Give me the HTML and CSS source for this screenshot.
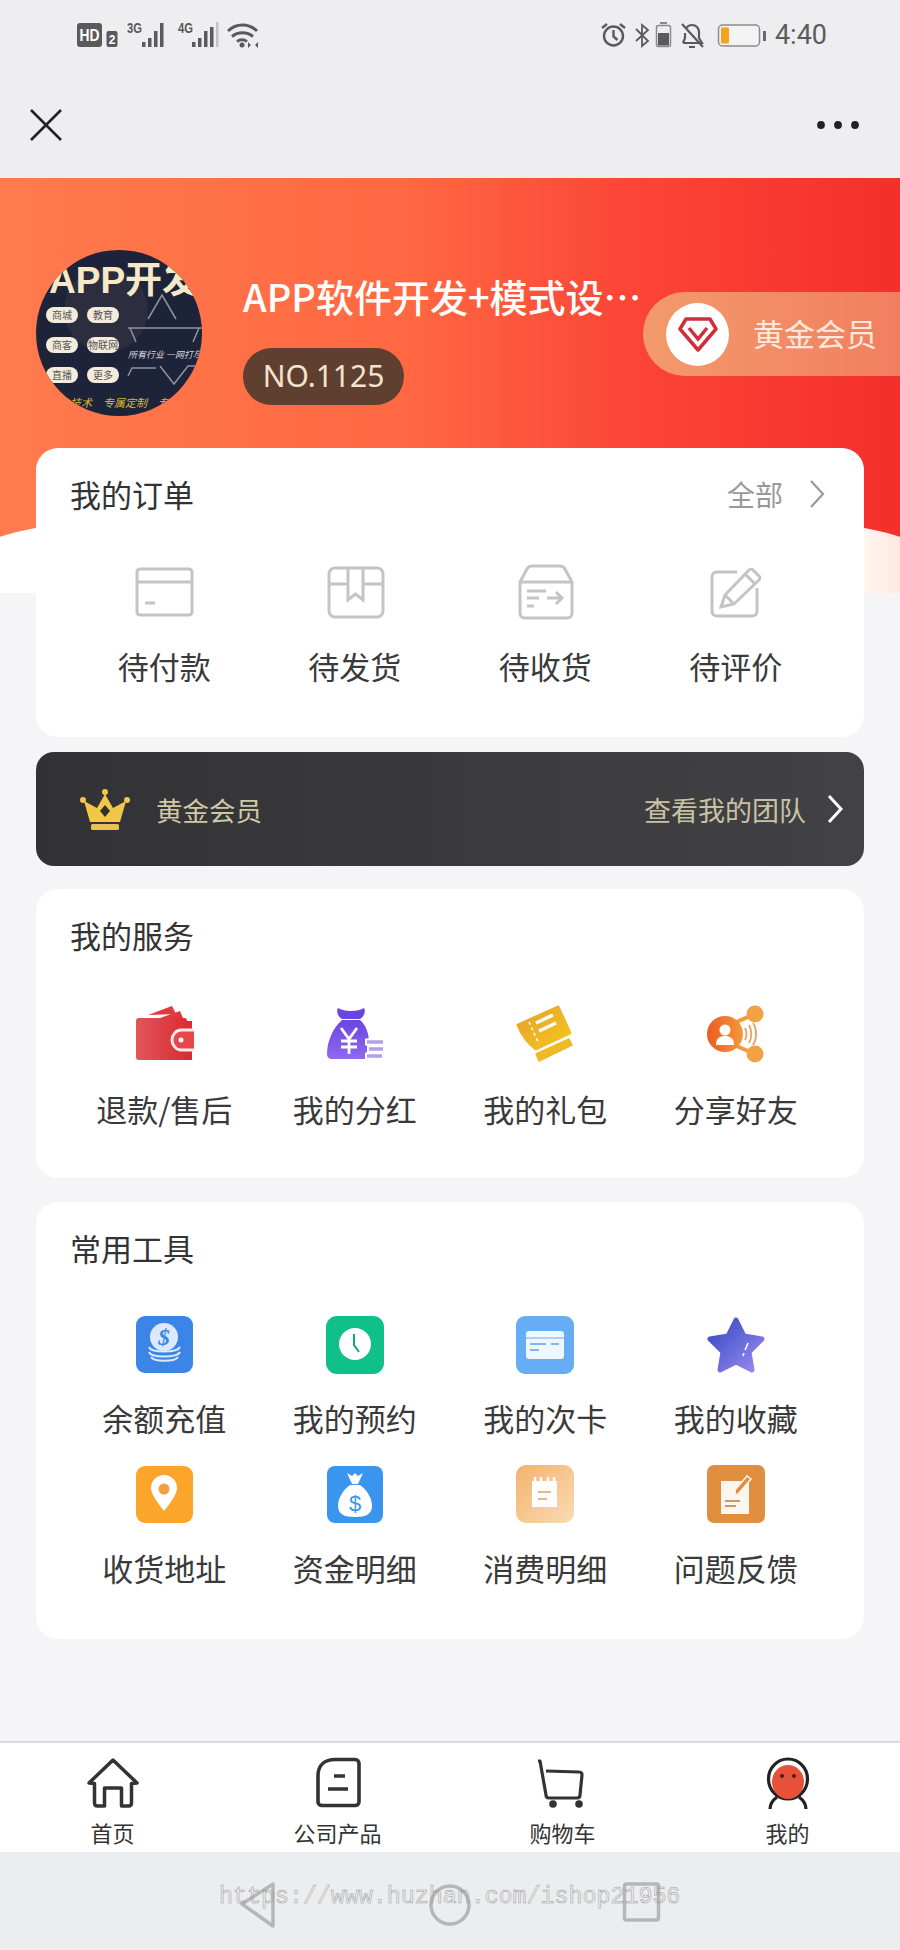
FILE: index.html
```html
<!DOCTYPE html>
<html lang="zh-CN">
<head>
<meta charset="utf-8">
<title>我的</title>
<link rel="stylesheet" href="styles.css">
</head>
<body>
<div class="page">
  <header class="top">
    <div class="status">
      <svg class="status-left" viewBox="76 20 190 30" width="190" height="30">
        <rect x="77" y="23" width="25" height="24" rx="3" fill="#5a5a5c"/>
        <text x="89.500" y="41" class="st-hd" textLength="20" lengthAdjust="spacingAndGlyphs">HD</text>
        <rect x="106.500" y="31" width="11" height="16" rx="2" fill="#5a5a5c"/>
        <text x="112" y="44" class="st-two">2</text>
        <text x="127" y="33" class="st-net" textLength="15" lengthAdjust="spacingAndGlyphs">3G</text>
        <g fill="#5a5a5c">
          <rect x="142" y="42" width="3.500" height="5"/><rect x="148" y="38" width="3.500" height="9"/><rect x="154" y="31" width="3.500" height="16"/><rect x="160" y="23" width="3.500" height="24"/>
        </g>
        <text x="178" y="33" class="st-net" textLength="15" lengthAdjust="spacingAndGlyphs">4G</text>
        <g fill="#5a5a5c">
          <rect x="192" y="42" width="3.500" height="5"/><rect x="198" y="38" width="3.500" height="9"/><rect x="204" y="31" width="3.500" height="16"/><rect x="210" y="27" width="3.500" height="20"/>
        </g>
        <rect x="216" y="22" width="2.500" height="25" fill="#c4c4c6"/>
        <g fill="none" stroke="#5a5a5c" stroke-width="3">
          <path d="M228 31c8-8 21-8 29 0"/><path d="M232 36.500c6-5 15-5 21 0"/><path d="M237 41.500c3-2 7-2 10 0"/>
        </g>
        <circle cx="242" cy="45" r="2.500" fill="#5a5a5c"/>
        <path d="M248 42l3 3-3 3zM258 42l-3 3 3 3z" fill="#5a5a5c"/>
      </svg>
      <div class="status-right">
        <svg viewBox="598 20 170 30" width="170" height="30">
          <g fill="none" stroke="#5a5a5c" stroke-width="2.400">
            <circle cx="612.500" cy="36" r="9.500"/>
            <path d="M612.500 30v6.500l4 3.500"/>
            <path d="M601 28l5-4M624 28l-5-4"/>
            <path d="M635 29l12 12-6 5V25l6 5-12 11" stroke-width="1.800"/>
          </g>
          <rect x="655.500" y="25.500" width="14" height="21" rx="2" fill="none" stroke="#8a8a8c" stroke-width="1.500"/>
          <rect x="659" y="22" width="7" height="2" fill="#8a8a8c"/>
          <rect x="657" y="33" width="11" height="12.500" fill="#5a5a5c"/>
          <g fill="none" stroke="#5a5a5c" stroke-width="2.200">
            <path d="M682 43h19l-3-5v-6c0-4-3-7-7-7-2.500 0-4.500 1-5.500 3M684 33v5l-2 5"/>
            <path d="M681 24l21 23M688 47h6"/>
          </g>
          <rect x="717.500" y="25" width="41" height="21" rx="4" fill="#f3f3f3" stroke="#8c8c8c" stroke-width="1.500"/>
          <rect x="720" y="27.500" width="8" height="16" rx="1" fill="#f7a21b"/>
          <rect x="762" y="31" width="3" height="10" fill="#6a6a6a"/>
        </svg>
        <span class="clock">4:40</span>
      </div>
    </div>
    <div class="navbar">
      <svg viewBox="0 0 32 32" width="32" height="32"><path d="M1 1l30 30M31 1L1 31" stroke="#222" stroke-width="2.600" fill="none"/></svg>
      <svg viewBox="0 0 42 8" width="42" height="8"><circle cx="4" cy="4" r="3.900" fill="#222"/><circle cx="21" cy="4" r="3.900" fill="#222"/><circle cx="38" cy="4" r="3.900" fill="#222"/></svg>
    </div>
  </header>

  <section class="hero">
    <div class="avatar">
      <svg viewBox="0 0 166 166" width="166" height="166">
        <rect width="166" height="166" fill="#1d2338"/>
        <circle cx="70" cy="60" r="42" fill="#3b3a45" opacity=".5"/>
        <text x="13" y="43" class="av-title">APP开发</text>
        <g class="av-chip-box">
          <rect x="10" y="57" width="32" height="16" rx="8"/><rect x="51" y="57" width="32" height="16" rx="8"/>
          <rect x="10" y="87" width="32" height="16" rx="8"/><rect x="51" y="87" width="32" height="16" rx="8"/>
          <rect x="10" y="117" width="32" height="16" rx="8"/><rect x="51" y="117" width="32" height="16" rx="8"/>
        </g>
        <g class="av-chip">
          <text x="26" y="69">商城</text><text x="67" y="69">教育</text>
          <text x="26" y="99">商客</text><text x="67" y="99">物联网</text>
          <text x="26" y="129">直播</text><text x="67" y="129">更多</text>
        </g>
        <g fill="none" stroke="#8d93a5" stroke-width="1.500">
          <path d="M112 69l14-24 14 24"/><path d="M92 78h74M94 78l6 14M163 78l-6 14"/>
          <path d="M92 126l4-8h24M124 116l14 18 14-18h14"/>
        </g>
        <text x="92" y="108" class="av-sub">所有行业 一网打尽</text>
        <text x="34" y="157" class="av-foot">技术　专属定制　专</text>
      </svg>
    </div>
    <div class="hero-info">
      <h1 class="hero-title">APP软件开发+模式设…</h1>
      <span class="hero-no">NO.1125</span>
    </div>
    <div class="hero-level">
      <span class="level-badge">
        <svg viewBox="0 0 40 36" width="40" height="36"><path d="M8 3h24l6 10-18 21L2 13z" fill="none" stroke="#cf2f3a" stroke-width="3.500" stroke-linejoin="round"/><path d="M11 12l9 11 9-11" fill="none" stroke="#cf2f3a" stroke-width="3.500"/></svg>
      </span>
      <span class="level-text">黄金会员</span>
    </div>
  </section>

  <main class="main">
    <section class="card card-orders">
      <div class="card-head">
        <h2 class="card-title">我的订单</h2>
        <div class="card-more">
          <span>全部</span>
          <svg viewBox="0 0 16 30" width="16" height="30"><path d="M2 2l12 13L2 28" fill="none" stroke="#999" stroke-width="2.200"/></svg>
        </div>
      </div>
      <div class="grid">
        <div class="cell">
          <svg class="slot" viewBox="0 0 60 60"><g fill="none" stroke="#c4c4c5" stroke-width="3"><rect x="3" y="7" width="55" height="46" rx="3"/><path d="M3 20h55"/><path d="M11 41h10"/></g></svg>
          <span class="label">待付款</span>
        </div>
        <div class="cell">
          <svg class="slot" viewBox="0 0 60 60"><g fill="none" stroke="#c4c4c5" stroke-width="3"><rect x="4" y="6" width="54" height="49" rx="6"/><path d="M4 22h19M38 22h20"/><path d="M23 6v32l7.500-6 7.500 6V6"/></g></svg>
          <span class="label">待发货</span>
        </div>
        <div class="cell">
          <svg class="slot" viewBox="0 0 60 60"><g fill="none" stroke="#c4c4c5" stroke-width="3"><path d="M5 20l7-13c1-2 3-3 5-3h28c2 0 4 1 5 3l7 13v31c0 3-2 5-5 5H10c-3 0-5-2-5-5z"/><path d="M5 20h52"/><path d="M12 29h19M12 36h12M12 44h7M32 36h15M41 30l6 6-6 6"/></g></svg>
          <span class="label">待收货</span>
        </div>
        <div class="cell">
          <svg class="slot" viewBox="0 0 60 60"><g fill="none" stroke="#c4c4c5" stroke-width="3"><path d="M31 10H11c-3 0-5 2-5 5v34c0 3 2 5 5 5h35c3 0 5-2 5-5V26"/><path d="M15 45l4-12 24-25c1-1 3-1 4 0l6 6c1 1 1 3 0 4L28 42z"/><path d="M39 12l10 10M19 33l9 9"/></g></svg>
          <span class="label">待评价</span>
        </div>
      </div>
    </section>

    <section class="member">
      <svg class="crown" viewBox="0 0 50 42" width="50" height="42">
        <path d="M25 6l8 14 13-7-6 21H10L4 13l13 7z" fill="#f1c74a"/>
        <circle cx="25" cy="4" r="3" fill="#f1c74a"/><circle cx="3" cy="12" r="3" fill="#f1c74a"/><circle cx="47" cy="12" r="3" fill="#f1c74a"/>
        <path d="M25 17l5 6-5 6-5-6z" fill="#33302c"/>
        <rect x="11" y="36" width="28" height="6" rx="1.500" fill="#e7c058"/>
      </svg>
      <span class="member-name">黄金会员</span>
      <span class="member-link">查看我的团队</span>
      <svg viewBox="0 0 18 30" width="18" height="30"><path d="M3 2l12 13L3 28" fill="none" stroke="#fff" stroke-width="3"/></svg>
    </section>

    <section class="card card-service">
      <div class="card-head"><h2 class="card-title">我的服务</h2></div>
      <div class="grid">
        <div class="cell">
          <svg class="slot" viewBox="0 0 60 60">
            <defs><linearGradient id="gWallet" x1="0" x2="1"><stop offset="0" stop-color="#e05659"/><stop offset="1" stop-color="#d92a30"/></linearGradient></defs>
            <path d="M14 12L38 3l4 8zM26 15l20-7 3 7z" fill="#dc3b40"/>
            <path d="M2 18c0-2 1-3 3-3h45c2 0 3 1 3 3h5v39H5c-2 0-3-1-3-3z" fill="url(#gWallet)"/>
            <path d="M60 27H47c-5 0-9 5-9 10s4 10 9 10h13" fill="#e5474b" stroke="#fbe9e9" stroke-width="3"/>
            <circle cx="47" cy="37" r="2.500" fill="#fff"/>
          </svg>
          <span class="label">退款/售后</span>
        </div>
        <div class="cell">
          <svg class="slot" viewBox="0 0 60 60">
            <defs><linearGradient id="gBag" x1="0" x2="0" y1="0" y2="1"><stop offset="0" stop-color="#6b45e2"/><stop offset="1" stop-color="#8f69ee"/></linearGradient></defs>
            <path d="M13 5c6 4 20 4 26 0 2 3 0 9-4 11H17c-4-2-6-8-4-11z" fill="#6b45e2"/>
            <path d="M17 17h18c6 5 9 14 9 23v14c0 1-1 2-2 2H7c-3 0-5-2-5-5 0-13 6-26 15-34z" fill="url(#gBag)"/>
            <path d="M16 25l8 11 8-11M24 36v15M16 38h16M16 44h16" fill="none" stroke="#fff" stroke-width="2.800"/>
            <path d="M40 39h18M42 46h16M40 53h17" stroke="#fff" stroke-width="7"/>
            <path d="M42 39h16M44 46h14M42 53h15" stroke="#b3a0ea" stroke-width="3.500"/>
          </svg>
          <span class="label">我的分红</span>
        </div>
        <div class="cell">
          <svg class="slot" viewBox="0 0 60 60">
            <defs><linearGradient id="gTicket" x1="0" x2="1" y1="0" y2="1"><stop offset="0" stop-color="#e6a02b"/><stop offset="1" stop-color="#f5c81f"/></linearGradient></defs>
            <path d="M24 58l-3-7 33-15 3 6z" fill="#eeba26" stroke="#eeba26" stroke-width="1.500" stroke-linejoin="round"/>
            <path d="M3 22L43 4l12 26-34 16C14 41 7 32 3 22z" fill="url(#gTicket)" stroke="url(#gTicket)" stroke-width="3" stroke-linejoin="round"/>
            <path d="M14 19l10 22" stroke="#fff" stroke-width="1.500" stroke-dasharray="3 3" fill="none"/>
            <path d="M21 20l17-8M24 28l17-8" stroke="#fff" stroke-width="3.500"/>
          </svg>
          <span class="label">我的礼包</span>
        </div>
        <div class="cell">
          <svg class="slot" viewBox="0 0 60 60">
            <defs><linearGradient id="gShare" x1="0" x2="1"><stop offset="0" stop-color="#ee5a22"/><stop offset="1" stop-color="#f19a3a"/></linearGradient></defs>
            <path d="M28 20L49 11M28 42l21 9" stroke="#f19a3a" stroke-width="4"/>
            <circle cx="49" cy="11" r="8.500" fill="#f2a145"/><circle cx="49" cy="51" r="8.500" fill="#f2a145"/>
            <circle cx="19" cy="31" r="18" fill="url(#gShare)"/>
            <circle cx="19" cy="27" r="5.500" fill="#fff"/><path d="M10 42c0-7 4-9 9-9s9 2 9 9z" fill="#fff"/>
            <g fill="none" stroke="#e8a060" stroke-width="1.800"><path d="M39 25c2 4 2 8 0 12M43 22c3 5 3 13 0 18M47 20c4 6 4 16 0 22"/></g>
          </svg>
          <span class="label">分享好友</span>
        </div>
      </div>
    </section>

    <section class="card card-tools">
      <div class="card-head"><h2 class="card-title">常用工具</h2></div>
      <div class="grid grid-tools">
        <div class="cell">
          <svg class="slot" viewBox="0 0 60 60">
            <rect x="2" y="2" width="57" height="57" rx="9" fill="#3b85e6"/>
            <g fill="none" stroke="#dbe9fb" stroke-width="2.200"><path d="M15 33c2 6 28 6 31 0M15 38c2 6 28 6 31 0M17 43c3 5 24 5 27 0"/></g>
            <circle cx="30" cy="23" r="14" fill="#dbe9fb"/>
            <text x="30" y="31" class="ic-dollar">$</text>
          </svg>
          <span class="label">余额充值</span>
        </div>
        <div class="cell">
          <svg class="slot" viewBox="0 0 60 60">
            <rect x="1" y="2" width="58" height="58" rx="11" fill="#0fc088"/>
            <circle cx="30" cy="30" r="16" fill="#fff"/>
            <path d="M29 20v11l5 7" fill="none" stroke="#0fa878" stroke-width="2"/>
          </svg>
          <span class="label">我的预约</span>
        </div>
        <div class="cell">
          <svg class="slot" viewBox="0 0 60 60">
            <rect x="1" y="2" width="58" height="58" rx="9" fill="#67adf6"/>
            <rect x="11" y="17" width="38" height="28" rx="3" fill="#eef6fe"/>
            <path d="M11 24h38" stroke="#67adf6" stroke-width="1"/>
            <path d="M15 30h16M36 30h8M15 36h9" stroke="#7fb6ee" stroke-width="2"/>
          </svg>
          <span class="label">我的次卡</span>
        </div>
        <div class="cell">
          <svg class="slot" viewBox="0 0 60 60">
            <defs><linearGradient id="gStar" x1="0" x2="1" y1="0" y2="1"><stop offset="0" stop-color="#3347c2"/><stop offset="1" stop-color="#9c8cf0"/></linearGradient></defs>
            <path d="M30 6l8 16 18 3-13 13 3 18-16-8-16 8 3-18L4 25l18-3z" fill="url(#gStar)" stroke="url(#gStar)" stroke-width="5" stroke-linejoin="round"/>
            <path d="M42 29c-1 3-2 5-3 7M38 39l-1 3" stroke="#fff" stroke-width="1.500" fill="none"/>
          </svg>
          <span class="label">我的收藏</span>
        </div>
        <div class="cell">
          <svg class="slot" viewBox="0 0 60 60">
            <rect x="2" y="2" width="57" height="57" rx="9" fill="#fba62a"/>
            <path d="M30 47C23 38 17 30 17 24a13 13 0 0 1 26 0c0 6-6 14-13 23z" fill="#fff"/>
            <circle cx="30" cy="25" r="5.500" fill="#f2a040"/>
          </svg>
          <span class="label">收货地址</span>
        </div>
        <div class="cell">
          <svg class="slot" viewBox="0 0 60 60">
            <rect x="2" y="2" width="56" height="57" rx="8" fill="#3a95ee"/>
            <path d="M22 9l5 3 3-3 3 3 5-3-5 11h-6z" fill="#fff"/>
            <path d="M25 21h10c7 5 12 13 12 21 0 8-6 11-17 11s-17-3-17-11c0-8 5-16 12-21z" fill="#fff"/>
            <text x="30" y="47" class="ic-bag">$</text>
          </svg>
          <span class="label">资金明细</span>
        </div>
        <div class="cell">
          <svg class="slot" viewBox="0 0 60 60">
            <defs><linearGradient id="gNote" x1="0" x2="1" y1="0" y2="1"><stop offset="0" stop-color="#f4b26f"/><stop offset="1" stop-color="#f9dcb2"/></linearGradient></defs>
            <rect x="1" y="1" width="58" height="58" rx="10" fill="url(#gNote)"/>
            <rect x="17" y="17" width="25" height="26" fill="#fff"/>
            <path d="M20 13v7M26 13v7M33 13v7M39 13v7" stroke="#fff" stroke-width="2.500"/>
            <path d="M23 28h13M23 35h9" stroke="#e2b98c" stroke-width="2"/>
          </svg>
          <span class="label">消费明细</span>
        </div>
        <div class="cell">
          <svg class="slot" viewBox="0 0 60 60">
            <rect x="1" y="1" width="58" height="58" rx="7" fill="#e08e40"/>
            <rect x="15" y="17" width="28" height="33" fill="#fdf6ee"/>
            <path d="M19 37h15M19 42h11" stroke="#c89a6a" stroke-width="2"/>
            <path d="M30 32l-1-6 12-14 4 3-12 14z" fill="#e08e40" stroke="#fdf6ee" stroke-width="1.500"/>
          </svg>
          <span class="label">问题反馈</span>
        </div>
      </div>
    </section>
  </main>

  <nav class="tabbar">
    <div class="tab">
      <svg viewBox="0 0 60 52" width="60" height="52"><path d="M30 3l24 23-5.500.5V46c0 2-1 3-3 3h-7V31h-17v18h-7c-2 0-3-1-3-3V26.500L6 26z" fill="none" stroke="#333" stroke-width="3.500" stroke-linejoin="round"/></svg>
      <span class="tab-label">首页</span>
    </div>
    <div class="tab">
      <svg viewBox="0 0 60 52" width="60" height="52"><path d="M10 19C10 8 17 2.500 27 2.500h20c2 0 4 1.500 4 4V45c0 2-2 3.500-4 3.500H14c-2 0-4-1.500-4-3.500z" fill="none" stroke="#333" stroke-width="3.600"/><path d="M26 19h11M20 32h20" stroke="#333" stroke-width="3.600"/></svg>
      <span class="tab-label">公司产品</span>
    </div>
    <div class="tab">
      <svg viewBox="0 0 60 52" width="60" height="52"><path d="M5 4h2l6 34c0 2 1 3 3 3h28c2 0 3-1 3-3l2-20c0-2-1-3-3-3l-33-1" fill="none" stroke="#333" stroke-width="3.200" stroke-linejoin="round"/><circle cx="20" cy="47" r="3.800" fill="#333"/><circle cx="46" cy="47" r="3.800" fill="#333"/></svg>
      <span class="tab-label">购物车</span>
    </div>
    <div class="tab">
      <svg viewBox="0 0 60 52" width="60" height="52">
        <ellipse cx="30" cy="22" rx="19.500" ry="20" fill="none" stroke="#222" stroke-width="3.200"/>
        <ellipse cx="30" cy="25" rx="16" ry="17" fill="#e9503a"/>
        <circle cx="24" cy="19" r="2" fill="#44221c"/><circle cx="36" cy="19" r="2" fill="#44221c"/>
        <path d="M12 52c0-5 3-9 7-12M48 52c0-5-3-9-7-12" fill="none" stroke="#222" stroke-width="3.200"/>
      </svg>
      <span class="tab-label">我的</span>
    </div>
  </nav>

  <footer class="sysnav">
    <svg class="sys-icons" viewBox="0 0 900 98" width="900" height="98">
      <g fill="none" stroke="#b6b6b8" stroke-width="3.500" stroke-linejoin="round">
        <path d="M273 32L242 52l31 22z"/>
        <circle cx="450" cy="53" r="19"/>
        <rect x="624.500" y="32" width="34" height="36" rx="2"/>
      </g>
    </svg>
    <span class="watermark">https://www.huzhan.com/ishop21956</span>
  </footer>
</div>
</body>
</html>
```
FILE: styles.css
```css
* { box-sizing: border-box; }
html, body { margin: 0; padding: 0; }
body {
  background: #f5f5f7;
  font-family: "Noto Sans CJK SC", "Noto Sans", sans-serif;
  color: #333;
}
h1, h2 { margin: 0; font-weight: 400; }
svg { display: block; flex: none; }

.page {
  width: 900px;
  height: 1950px;
  display: flex;
  flex-direction: column;
  overflow: hidden;
}

/* top */
.top { height: 178px; background: #eeeef0; flex: none; }
.status {
  height: 72px;
  padding: 20px 73px 0 76px;
  display: flex;
  justify-content: space-between;
  align-items: flex-start;
}
.status-right { display: flex; align-items: center; gap: 6px; }
.clock {
  font-family: Roboto, sans-serif;
  font-size: 27px;
  line-height: 30px;
  color: #5c5c5e;
}
.st-hd, .st-two, .st-net { font-family: "Liberation Sans", sans-serif; font-weight: 700; }
.st-hd { font-size: 16px; fill: #fff; text-anchor: middle; }
.st-two { font-size: 12px; fill: #fff; text-anchor: middle; }
.st-net { font-size: 15px; fill: #5a5a5c; }
.navbar {
  height: 106px;
  padding: 0 41px 0 30px;
  display: flex;
  justify-content: space-between;
  align-items: center;
}

/* hero */
.hero {
  position: relative;
  flex: none;
  height: 415px;
  margin-bottom: -145px;
  padding: 72px 0 0 36px;
  display: flex;
  align-items: flex-start;
  overflow: hidden;
  background: linear-gradient(90deg, #ff7b4d 0%, #ff6842 45%, #fb4537 70%, #f42f2c 100%);
}
.hero::after {
  content: "";
  position: absolute;
  left: -20px;
  right: -20px;
  top: 324px;
  bottom: 0;
  border-radius: 470px 470px 0 0 / 49px 49px 0 0;
  background: linear-gradient(90deg, #fff 90%, #ffe4d8 100%);
}
.avatar {
  width: 166px;
  height: 166px;
  border-radius: 50%;
  overflow: hidden;
  flex: none;
}
.av-title { font-family: "Liberation Sans", "Noto Sans CJK SC", sans-serif; font-weight: 700; font-size: 37px; fill: #f6e9c8; }
.av-chip-box rect { fill: #f3ecdc; }
.av-chip text { font-size: 10px; fill: #555; text-anchor: middle; }
.av-sub { font-size: 9px; fill: #d8d8de; font-style: italic; }
.av-foot { font-size: 11px; fill: #d6b63e; font-style: italic; }
.hero-info {
  margin: 21px 0 0 41px;
  width: 400px;
  flex: none;
}
.hero-title {
  font-size: 38px;
  line-height: 50px;
  font-weight: 500;
  color: #fff;
  white-space: nowrap;
}
.hero-no {
  display: inline-block;
  margin-top: 27px;
  width: 161px;
  height: 57px;
  border-radius: 29px;
  background: #5f3f30;
  color: #f3e3d0;
  font-size: 30px;
  line-height: 55px;
  text-align: center;
  font-family: "Noto Sans", sans-serif;
}
.hero-level {
  margin: 42px 0 0 auto;
  width: 257px;
  height: 84px;
  padding-left: 23px;
  display: flex;
  align-items: center;
  gap: 24px;
  border-radius: 42px 0 0 42px;
  background: linear-gradient(90deg, #f39a6c, #f27e60);
  flex: none;
}
.level-badge {
  width: 63px;
  height: 63px;
  border-radius: 50%;
  background: #fff;
  display: flex;
  align-items: center;
  justify-content: center;
}
.level-text { font-size: 31px; line-height: 40px; margin-top: -3px; color: #fde9dc; white-space: nowrap; }

/* main */
.main {
  position: relative;
  flex: 1;
  padding: 0 36px;
  min-height: 0;
}
.card { background: #fff; border-radius: 22px; padding: 22px 33px 0; }
.card-orders { height: 289px; }
.card-service { height: 289px; margin-top: 23px; }
.card-tools { height: 437px; margin-top: 24px; }
.card-head {
  height: 48px;
  padding: 0 0 0 1px;
  display: flex;
  align-items: center;
  justify-content: space-between;
}
.card-title { font-size: 31px; line-height: 48px; color: #333; }
.card-more {
  display: flex;
  align-items: center;
  gap: 26px;
  padding-right: 6px;
  color: #999;
  font-size: 28px;
}
.grid {
  display: grid;
  grid-template-columns: repeat(4, 1fr);
  margin-top: 44px;
}
.grid-tools { margin-top: 42px; row-gap: 24px; }
.cell { display: flex; flex-direction: column; align-items: center; }
.slot { width: 60px; height: 60px; }
.label {
  margin-top: 22px;
  font-size: 31px;
  line-height: 44px;
  color: #3a3a3a;
  white-space: nowrap;
}
.card-service .label { margin-top: 24px; }

.member {
  height: 114px;
  margin-top: 15px;
  padding: 0 20px 0 44px;
  display: flex;
  align-items: center;
  border-radius: 18px;
  background: linear-gradient(90deg, #323234, #3a3a3c 50%, #424246);
}
.member-name { margin-left: 26px; font-size: 26.500px; color: #cfc8a6; }
.member-link { margin: 0 20px 0 auto; font-size: 27px; color: #c9c2a2; }

/* tabbar */
.tabbar {
  flex: none;
  height: 111px;
  padding-top: 14px;
  background: #fff;
  border-top: 2px solid #dcdcde;
  display: grid;
  grid-template-columns: repeat(4, 1fr);
}
.tab { display: flex; flex-direction: column; align-items: center; }
.tab-label {
  margin-top: 8px;
  font-size: 22px;
  line-height: 30px;
  color: #333;
  white-space: nowrap;
}

/* system nav */
.sysnav {
  position: relative;
  flex: none;
  height: 98px;
  background: #ecedef;
}
.watermark {
  position: absolute;
  left: 219px;
  top: 28px;
  font-family: "Liberation Mono", monospace;
  font-size: 23.300px;
  line-height: 34px;
  color: transparent;
  -webkit-text-stroke: 0.5px #98989a;
  white-space: nowrap;
}
.ic-dollar { font-family: "Liberation Serif", serif; font-style: italic; font-weight: 700; font-size: 23px; fill: #3b85e6; text-anchor: middle; }
.ic-bag { font-family: "Liberation Sans", sans-serif; font-size: 22px; fill: #3a95ee; text-anchor: middle; }
```
